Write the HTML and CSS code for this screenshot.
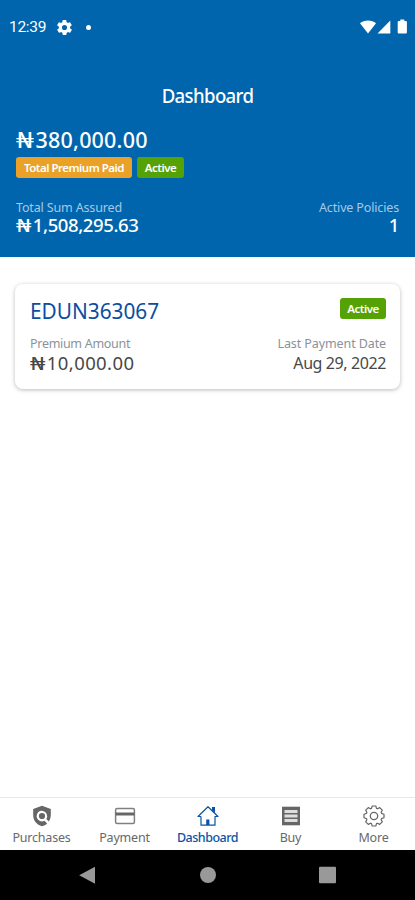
FILE: index.html
```html
<!DOCTYPE html>
<html lang="en">
<head>
  <meta charset="utf-8">
  <meta name="viewport" content="width=device-width, initial-scale=1">
  <title>Dashboard</title>
  <link rel="stylesheet" href="styles.css">
</head>
<body>
  <div class="app">
    <header class="header">
      <div class="status-bar">
        <span class="clock">12:39</span>
        <svg class="status-gear" width="15" height="15" viewBox="2 2 20 20"><path fill="#fff" d="M19.400 13c0-.3.1-.6.1-1s0-.7-.1-1l2.100-1.600c.2-.2.200-.4.100-.6l-2-3.500c-.1-.2-.4-.3-.6-.2l-2.500 1c-.5-.4-1.100-.7-1.700-1l-.4-2.600c0-.3-.2-.5-.4-.5h-4c-.2 0-.4.2-.5.4l-.4 2.700c-.6.2-1.100.6-1.700 1l-2.500-1c-.2-.1-.5 0-.6.2l-2 3.500c-.1.200-.1.500.1.600L4.600 11c-.1.300-.1.700-.1 1s0 .7.100 1l-2.100 1.600c-.2.200-.2.400-.1.600l2 3.500c.1.200.4.300.6.200l2.500-1c.5.400 1.100.7 1.700 1l.4 2.600c0 .3.200.5.500.5h4c.2 0 .4-.2.4-.4l.4-2.700c.6-.2 1.100-.6 1.700-1l2.500 1c.2.1.5 0 .6-.2l2-3.500c.1-.2.1-.5-.1-.6L19.400 13zM12 15.400a3.400 3.400 0 1 1 0-6.800 3.400 3.400 0 0 1 0 6.800z"/></svg>
        <span class="status-dot"></span>
        <svg class="status-signal" width="48" height="16" viewBox="0 0 48 16">
          <path fill="#fff" d="M1 4.200C5.200.5 12.800.5 17 4.200L9 14.500z"/>
          <path fill="#fff" d="M31.300 1.500v13H18.500z"/>
          <path fill="#fff" d="M38.700 3q0-1 1-1h1.600V.5h4V2h1.600q1 0 1 1v10.500q0 1-1 1h-7.200q-1 0-1-1z"/>
        </svg>
      </div>
      <h1 class="title">Dashboard</h1>
      <div class="total"><span class="naira">₦</span>380,000.00</div>
      <div class="badges">
        <span class="badge badge-paid">Total Premium Paid</span>
        <span class="badge">Active</span>
      </div>
      <div class="row labels">
        <span>Total Sum Assured</span>
        <span>Active Policies</span>
      </div>
      <div class="row values">
        <span><span class="naira">₦</span>1,508,295.63</span>
        <span>1</span>
      </div>
    </header>

    <main class="content">
      <section class="card">
        <div class="row card-head">
          <h2 class="policy">EDUN363067</h2>
          <span class="badge">Active</span>
        </div>
        <div class="row card-labels">
          <span>Premium Amount</span>
          <span class="date-label">Last Payment Date</span>
        </div>
        <div class="row card-values">
          <span><span class="naira">₦</span>10,000.00</span>
          <span class="date">Aug 29, 2022</span>
        </div>
      </section>
    </main>

    <nav class="tabs">
      <a class="tab">
        <svg width="24" height="24" viewBox="0 0 24 24"><path fill="#666" d="M12 1.800L3.200 5v6.500c0 5 3.600 9.300 8.800 10.700 2-.5 3.700-1.500 5.100-2.800l-2.700-2.700a5.300 5.300 0 1 1 1.900-1.800l2.500 2.500a11 11 0 0 0 2-5.900V5z"/><circle cx="12" cy="12" r="3.100" fill="#666"/></svg>
        <span>Purchases</span>
      </a>
      <a class="tab">
        <svg width="24" height="24" viewBox="0 0 24 24"><rect x="2.600" y="4.600" width="18.800" height="14.800" rx="1.500" fill="none" stroke="#808080" stroke-width="1.500"/><path fill="#666" d="M2.600 8.500h18.800v3H2.600z"/></svg>
        <span>Payment</span>
      </a>
      <a class="tab tab-active">
        <svg width="24" height="24" viewBox="0 0 24 24"><path fill="none" stroke="#0b54a4" stroke-width="1.200" stroke-linejoin="round" d="M5 12.500v8.700h14v-8.700h3L12 2.700l-10 9.800h3"/><path fill="#0b54a4" d="M16 3h3v6.300l-3-3zM10.200 15.500h3.200V21h-3.200z"/></svg>
        <span>Dashboard</span>
      </a>
      <a class="tab">
        <svg width="24" height="24" viewBox="0 0 24 24"><path fill="#666" d="M3 2.700h18v18.600H3z"/><path stroke="#ddd" stroke-width="3.200" d="M5.500 7.500h13M5.500 12h13M5.500 16.500h13"/></svg>
        <span>Buy</span>
      </a>
      <a class="tab">
        <svg width="24" height="24" viewBox="0 0 24 24"><path fill="none" stroke="#666" stroke-width="1.200" stroke-linejoin="round" d="M10.200 2h3.600l.7 2.400 1 .4 2.200-1.200 2.600 2.600-1.200 2.200.4 1 2.500.8v3.600l-2.500.8-.4 1 1.200 2.200-2.600 2.600-2.200-1.200-1 .4-.7 2.400h-3.600l-.7-2.400-1-.4-2.200 1.200-2.600-2.600 1.200-2.200-.4-1-2.500-.8v-3.600l2.500-.8.4-1-1.200-2.200 2.600-2.600 2.200 1.200 1-.4z"/><circle cx="12" cy="12" r="3.700" fill="none" stroke="#666" stroke-width="1.300"/></svg>
        <span>More</span>
      </a>
    </nav>

    <footer class="system-bar">
      <svg width="18" height="18" viewBox="0 0 18 18"><path fill="#999" d="M16 .8v17L.2 9.300z"/></svg>
      <svg width="18" height="18" viewBox="0 0 18 18"><circle cx="9" cy="9" r="8" fill="#999"/></svg>
      <svg width="18" height="18" viewBox="0 0 18 18"><rect y=".7" width="17" height="16.500" rx="1" fill="#999"/></svg>
    </footer>
  </div>
</body>
</html>
```
FILE: styles.css
```css
* {
  box-sizing: border-box;
  margin: 0;
  padding: 0;
}

body {
  background: #fff;
  font-family: "Noto Sans", "Open Sans", sans-serif;
  overflow: hidden;
}

.app {
  display: flex;
  flex-direction: column;
  height: 900px;
  width: 415px;
}

.app span,
.app h1,
.app h2 {
  white-space: nowrap;
}

.header {
  background: #0065ac;
  color: #fff;
  height: 257px;
  padding: 0 16px;
}

.status-bar {
  align-items: center;
  display: flex;
  height: 54px;
  margin: 0 -7px;
}

.clock {
  font: 15.5px/20px Roboto, sans-serif;
  letter-spacing: -0.3px;
  width: 48px;
}

.status-dot {
  background: #fff;
  border-radius: 50%;
  height: 5px;
  margin-left: 14px;
  width: 5px;
}

.status-signal {
  margin-left: auto;
  margin-right: -1px;
}

.title {
  font-size: 20px;
  font-weight: 500;
  letter-spacing: -0.7px;
  line-height: 28px;
  margin-top: 28px;
  text-align: center;
  transform: scaleX(0.93);
}

.naira {
  display: inline-block;
  font-weight: 400;
  transform: scaleX(1.45);
  transform-origin: left;
  width: 1.03em;
  margin-right: -0.12em;
}

.total {
  font-size: 21.5px;
  font-weight: 500;
  height: 28px;
  letter-spacing: 0.2px;
  line-height: 28px;
  margin-top: 16px;
}

.badges {
  display: flex;
  gap: 5px;
  margin-top: 3px;
}

.badge {
  background: #54a206;
  border-radius: 3px;
  color: #fff;
  font-size: 11.5px;
  font-weight: 600;
  height: 21px;
  letter-spacing: -0.5px;
  line-height: 22px;
  text-align: center;
  width: 47px;
}

.badge-paid {
  background: #e9a227;
  width: 116px;
}

.row {
  display: flex;
  justify-content: space-between;
}

.labels {
  color: #a5c9e8;
  font-size: 12.5px;
  letter-spacing: -0.15px;
  line-height: 17px;
  margin-top: 21px;
}

.values {
  font-size: 18.5px;
  font-weight: 500;
  letter-spacing: -0.4px;
  line-height: 18px;
}

.content {
  flex: 1;
  padding: 27px 15px;
}

.card {
  background: #fff;
  border-radius: 8px;
  box-shadow: 0 1px 4px rgba(0, 0, 0, 0.27);
  height: 105px;
  padding: 12px 14px 0 15px;
}

.policy {
  color: #0b4da2;
  font-size: 22px;
  font-weight: 400;
  line-height: 29px;
  transform: scaleX(0.945);
  transform-origin: left;
}

.card .badge {
  margin-top: 2px;
  width: 46px;
}

.card-labels {
  color: #8a929b;
  font-size: 12.5px;
  letter-spacing: -0.3px;
  line-height: 18px;
  margin-top: 10px;
}

.date-label {
  letter-spacing: -0.1px;
}

.card-values {
  color: #484848;
  font-size: 18.5px;
  letter-spacing: 0.4px;
  line-height: 20px;
}

.date {
  font-size: 16px;
  letter-spacing: -0.4px;
}

.tabs {
  border-top: 1px solid #e8e8e8;
  display: grid;
  grid-template-columns: repeat(5, 1fr);
  height: 53px;
  padding-top: 6px;
}

.tab {
  align-items: center;
  color: #686868;
  display: flex;
  flex-direction: column;
  font-size: 12.5px;
  letter-spacing: -0.2px;
  line-height: 19px;
}

.tab-active {
  color: #0b54a4;
  font-weight: 500;
  letter-spacing: -0.5px;
}

.system-bar {
  align-items: center;
  background: #000;
  display: flex;
  gap: 102px;
  height: 50px;
  justify-content: center;
}
```
